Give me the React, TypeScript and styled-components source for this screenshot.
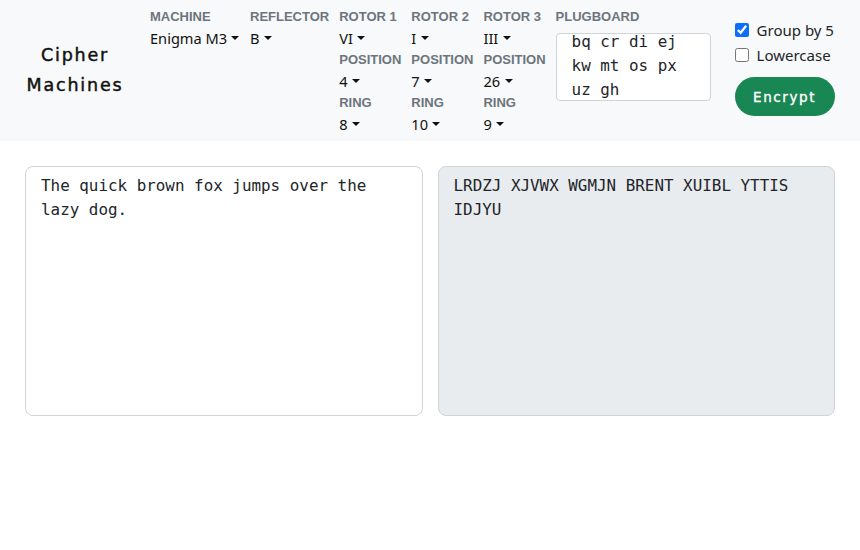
import React, { useEffect, useRef, useState } from "react"
import styled, { createGlobalStyle } from "styled-components"

const GlobalStyle = createGlobalStyle`
  body {
    margin: 0;
    background: #ffffff;
    font-family: "Noto Sans", "Open Sans", sans-serif;
    color: #212529;
  }
  * {
    box-sizing: border-box;
  }
`

interface Field {
  label: string
  value: string
}

const columns: { key: string; fields: Field[]; wide?: boolean }[] = [
  { key: "machine", fields: [{ label: "MACHINE", value: "Enigma M3" }], wide: true },
  { key: "reflector", fields: [{ label: "REFLECTOR", value: "B" }] },
  {
    key: "r1",
    fields: [
      { label: "ROTOR 1", value: "VI" },
      { label: "POSITION", value: "4" },
      { label: "RING", value: "8" },
    ],
  },
  {
    key: "r2",
    fields: [
      { label: "ROTOR 2", value: "I" },
      { label: "POSITION", value: "7" },
      { label: "RING", value: "10" },
    ],
  },
  {
    key: "r3",
    fields: [
      { label: "ROTOR 3", value: "III" },
      { label: "POSITION", value: "26" },
      { label: "RING", value: "9" },
    ],
  },
]

const App = () => {
  const plugRef = useRef<HTMLTextAreaElement>(null)
  const [group, setGroup] = useState(true)
  const [lower, setLower] = useState(false)

  useEffect(() => {
    if (plugRef.current) plugRef.current.scrollTop = 4
  }, [])

  return (
    <>
      <GlobalStyle />
      <Header>
        <Title>
          Cipher
          <br />
          Machines
        </Title>
        <Settings>
          {columns.map((col) => (
            <Column key={col.key} $wide={col.wide}>
              {col.fields.map((f) => (
                <React.Fragment key={f.label}>
                  <Label>{f.label}</Label>
                  <Dropdown>{f.value}</Dropdown>
                </React.Fragment>
              ))}
            </Column>
          ))}
          <PlugColumn>
            <Label>PLUGBOARD</Label>
            <Plugboard
              ref={plugRef}
              defaultValue="bq cr di ej kw mt os px uz gh"
              spellCheck={false}
            />
          </PlugColumn>
          <Options>
            <CheckRow>
              <Check type="checkbox" checked={group} onChange={() => setGroup(!group)} />
              Group by 5
            </CheckRow>
            <CheckRow>
              <Check type="checkbox" checked={lower} onChange={() => setLower(!lower)} />
              Lowercase
            </CheckRow>
            <EncryptButton>Encrypt</EncryptButton>
          </Options>
        </Settings>
      </Header>
      <Main>
        <TextBox defaultValue="The quick brown fox jumps over the lazy dog." spellCheck={false} />
        <TextBox
          $output
          readOnly
          value="LRDZJ XJVWX WGMJN BRENT XUIBL YTTIS IDJYU"
          spellCheck={false}
        />
      </Main>
    </>
  )
}

export default App

const Header = styled.header`
  display: flex;
  align-items: flex-start;
  background: #f8f9fa;
  padding: 6px 25px 6px 0;
  height: 141px;
`

const Title = styled.h1`
  width: 150px;
  margin: 0;
  padding-top: 34px;
  text-align: center;
  font-family: "DejaVu Sans", sans-serif;
  font-weight: 400;
  font-size: 17.5px;
  line-height: 30px;
  letter-spacing: 1.8px;
  color: #111;
  -webkit-text-stroke: 0.45px #111;
`

const Settings = styled.div`
  display: flex;
  align-items: flex-start;
  gap: 10px;
  flex: 1;
`

const Column = styled.div<{ $wide?: boolean }>`
  display: flex;
  flex-direction: column;
  min-width: ${({ $wide }) => ($wide ? "90px" : "0")};
`

const Label = styled.div`
  font-family: "Liberation Sans", Arial, sans-serif;
  font-weight: 700;
  font-size: 13px;
  line-height: 21px;
  color: #6c757d;
  white-space: nowrap;
`

const Dropdown = styled.div`
  font-size: 14.6px;
  line-height: 22px;
  color: #111;
  white-space: nowrap;
  cursor: pointer;
  &::after {
    content: "";
    display: inline-block;
    margin-left: 0.3em;
    vertical-align: 0.255em;
    border-top: 0.3em solid #111;
    border-right: 0.3em solid transparent;
    border-left: 0.3em solid transparent;
    border-bottom: 0;
  }
`

const PlugColumn = styled.div`
  display: flex;
  flex-direction: column;
  margin-right: 14px;
`

const Plugboard = styled.textarea`
  margin-top: 6px;
  width: 155px;
  height: 68px;
  padding: 0 15px 8px;
  border: 1px solid #ced4da;
  border-radius: 4px;
  background: #fff;
  font-family: "DejaVu Sans Mono", monospace;
  font-size: 15.9px;
  line-height: 24px;
  color: #212529;
  resize: none;
  overflow: hidden;
  outline: none;
`

const Options = styled.div`
  display: flex;
  flex-direction: column;
  padding-top: 11px;
`

const CheckRow = styled.label`
  display: flex;
  align-items: center;
  gap: 8px;
  height: 25px;
  font-size: 15px;
  color: #212529;
  white-space: nowrap;
`

const Check = styled.input`
  margin: 0;
  width: 14px;
  height: 14px;
  accent-color: #0d6efd;
`

const EncryptButton = styled.button`
  margin-top: 10px;
  width: 100px;
  height: 39px;
  border: none;
  border-radius: 20px;
  background: #198754;
  color: #fff;
  font-family: "DejaVu Sans", sans-serif;
  font-weight: 400;
  font-size: 13.5px;
  letter-spacing: 1.6px;
  -webkit-text-stroke: 0.35px #fff;
  cursor: pointer;
`

const Main = styled.main`
  display: grid;
  grid-template-columns: 1fr 1fr;
  gap: 15px;
  padding: 25px 25px;
`

const TextBox = styled.textarea<{ $output?: boolean }>`
  height: 250px;
  padding: 7px 15px;
  border: 1px solid #ced4da;
  border-radius: 8px;
  background: ${({ $output }) => ($output ? "#e9ecef" : "#fff")};
  font-family: "DejaVu Sans Mono", monospace;
  font-size: 15.9px;
  line-height: 24px;
  color: #212529;
  resize: none;
  outline: none;
`
